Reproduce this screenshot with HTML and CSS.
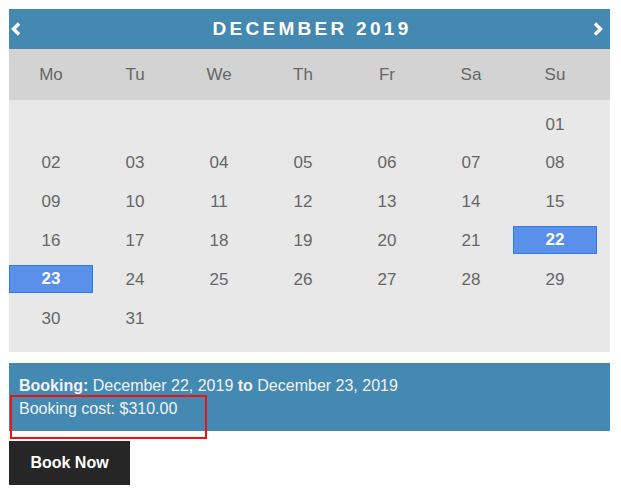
FILE: index.html
```html
<!DOCTYPE html>
<html lang="en">
<head>
<meta charset="UTF-8">
<meta name="viewport" content="width=device-width, initial-scale=1.0">
<title>Booking</title>
<link rel="stylesheet" href="styles.css">
</head>
<body>
<div class="booking-form">
    <div class="calendar">
        <div class="cal-header">
            <a class="nav prev" href="#">
                <svg width="10" height="14" viewBox="0 0 10 14"><polyline points="8,1.5 2.5,7 8,12.5" fill="none" stroke="#fff" stroke-width="3.4"/></svg>
            </a>
            <span class="month">December 2019</span>
            <a class="nav next" href="#">
                <svg width="10" height="14" viewBox="0 0 10 14"><polyline points="2,1.5 7.5,7 2,12.5" fill="none" stroke="#fff" stroke-width="3.4"/></svg>
            </a>
        </div>
        <div class="weekdays">
            <span>Mo</span><span>Tu</span><span>We</span><span>Th</span><span>Fr</span><span>Sa</span><span>Su</span>
        </div>
        <div class="days">
            <span></span><span></span><span></span><span></span><span></span><span></span><span>01</span>
            <span>02</span><span>03</span><span>04</span><span>05</span><span>06</span><span>07</span><span>08</span>
            <span>09</span><span>10</span><span>11</span><span>12</span><span>13</span><span>14</span><span>15</span>
            <span>16</span><span>17</span><span>18</span><span>19</span><span>20</span><span>21</span><span class="selected">22</span>
            <span class="selected">23</span><span>24</span><span>25</span><span>26</span><span>27</span><span>28</span><span>29</span>
            <span>30</span><span>31</span>
        </div>
    </div>
    <div class="summary">
        <p><strong>Booking:</strong> December 22, 2019 <strong>to</strong> December 23, 2019</p>
        <p>Booking cost: $310.00</p>
        <div class="mark"></div>
    </div>
    <button class="book-btn">Book Now</button>
</div>
</body>
</html>
```

FILE: styles.css
```css
body {
    margin: 9px;
    font-family: 'Liberation Sans', Arial, sans-serif;
    background-color: #fff;
}
.booking-form {
    width: 601px;
}
.calendar {
    color: #666;
}
.cal-header {
    height: 40px;
    display: flex;
    align-items: center;
    justify-content: space-between;
    padding: 0 7px 0 2px;
    background-color: #4489b2;
    color: #fff;
}
.cal-header .nav {
    display: flex;
    width: 10px;
    height: 14px;
}
.cal-header .month {
    margin-left: 10px;
    font-size: 19px;
    font-weight: bold;
    letter-spacing: 3.3px;
    text-transform: uppercase;
}
.weekdays {
    height: 51px;
    display: grid;
    grid-template-columns: repeat(7, 84px);
    align-items: center;
    background-color: #d3d3d3;
    font-size: 17px;
}
.weekdays span {
    text-align: center;
}
.days {
    display: grid;
    grid-template-columns: repeat(7, 84px);
    grid-auto-rows: 28px;
    row-gap: 10.9px;
    padding: 9px 0 20.5px;
    background-color: #e8e8e8;
    font-size: 17px;
}
.days span {
    display: flex;
    align-items: center;
    justify-content: center;
    padding-top: 3px;
    box-sizing: border-box;
    border: 1px solid transparent;
}
.days span.selected {
    padding-top: 0;
    background-color: #5a8fea;
    border-color: #2b7bf5;
    color: #fff;
    font-weight: bold;
}
.summary {
    position: relative;
    margin-top: 11px;
    height: 68px;
    padding: 11px 10px 0;
    box-sizing: border-box;
    background-color: #4489b2;
    color: #f2f2f2;
    font-size: 16px;
    line-height: 23px;
}
.summary p {
    margin: 0;
}
.summary .mark {
    position: absolute;
    left: 1px;
    top: 32px;
    width: 197px;
    height: 44px;
    box-sizing: border-box;
    border: 2.5px solid #f40f12;
}
.book-btn {
    margin-top: 10px;
    width: 121px;
    height: 44px;
    border: none;
    background-color: #262626;
    color: #fff;
    font-family: inherit;
    font-size: 16px;
    font-weight: bold;
}
```
